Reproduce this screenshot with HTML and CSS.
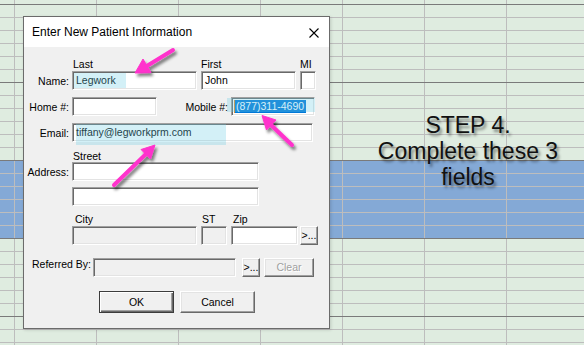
FILE: index.html
```html
<!DOCTYPE html>
<html>
<head>
<meta charset="utf-8">
<link rel="stylesheet" href="styles.css">
</head>
<body>
<div class="sheet">
  <div class="step">STEP 4.<br>Complete these 3<br>fields</div>

  <div class="dialog">
    <div class="titlebar">
      <span>Enter New Patient Information</span>
      <svg class="close" width="10" height="10" viewBox="0 0 10 10"><path d="M0.5 0.5 L9.5 9.5 M9.5 0.5 L0.5 9.5" stroke="#000" stroke-width="1.1" fill="none"/></svg>
    </div>
    <div class="dlg-body">
      <div class="toplabels">
        <span class="c-last">Last</span>
        <span class="c-first">First</span>
        <span class="c-mi">MI</span>
      </div>
      <div class="row">
        <span class="lbl">Name:</span>
        <div class="tb w125">Legwork</div>
        <div class="tb w95 ml4">John</div>
        <div class="tb w16 ml4"></div>
      </div>
      <div class="row mt7">
        <span class="lbl">Home #:</span>
        <div class="tb w85"></div>
        <span class="lbl lbl-mobile">Mobile #:</span>
        <div class="tb w84"><span class="sel">(877)311-4690</span></div>
      </div>
      <div class="row mt7">
        <span class="lbl">Email:</span>
        <div class="tb w241">tiffany@legworkprm.com</div>
      </div>
      <div class="street">Street</div>
      <div class="row">
        <span class="lbl">Address:</span>
        <div class="tb w187"></div>
      </div>
      <div class="row mt6 indent">
        <div class="tb w187"></div>
      </div>
      <div class="citylabels">
        <span class="c-city">City</span>
        <span class="c-st">ST</span>
        <span class="c-zip">Zip</span>
      </div>
      <div class="row indent">
        <div class="tb dis w125"></div>
        <div class="tb dis w26 ml4"></div>
        <div class="tb w67 ml4"></div>
        <div class="btn w18 ml2">&gt;...</div>
      </div>
      <div class="row mt13">
        <span class="lbl-ref">Referred By:</span>
        <div class="tb dis w143"></div>
        <div class="btn w18 ml6">&gt;...</div>
        <div class="btn w50 ml4 disabled">Clear</div>
      </div>
      <div class="row btnrow">
        <div class="btn big default w75">OK</div>
        <div class="btn big w75 ml6">Cancel</div>
      </div>
    </div>
  </div>

  <div class="hl hl-name"></div>
  <div class="hl hl-mobile"></div>
  <div class="hl hl-email"></div>

  <svg class="arrows" width="584" height="345" viewBox="0 0 584 345">
    <defs>
      <filter id="sh" x="-20%" y="-20%" width="160%" height="160%">
        <feGaussianBlur in="SourceAlpha" stdDeviation="1.6"/>
        <feOffset dx="2" dy="3" result="b"/>
        <feComponentTransfer><feFuncA type="linear" slope="0.5"/></feComponentTransfer>
        <feMerge><feMergeNode/><feMergeNode in="SourceGraphic"/></feMerge>
      </filter>
    </defs>
    <g filter="url(#sh)" fill="#ff33cc" stroke="#ff33cc">
      <line x1="173" y1="50" x2="146" y2="66.5" stroke-width="4" stroke-linecap="round"/>
      <polygon points="135,73 151,72.5 143,59" stroke-width="1" stroke-linejoin="round"/>
      <line x1="292" y1="145" x2="271" y2="125" stroke-width="4" stroke-linecap="round"/>
      <polygon points="262,115.5 276,120 266.5,130" stroke-width="1" stroke-linejoin="round"/>
      <line x1="114" y1="185" x2="146" y2="154" stroke-width="4" stroke-linecap="round"/>
      <polygon points="155,145 150.5,159 141,149.5" stroke-width="1" stroke-linejoin="round"/>
    </g>
  </svg>
</div>
</body>
</html>
```

FILE: styles.css
```css
* { box-sizing: border-box; }
html, body { margin: 0; padding: 0; }
body {
  width: 584px;
  height: 345px;
  overflow: hidden;
  font-family: "Liberation Sans", Arial, sans-serif;
  color: #000;
}
.sheet {
  position: relative;
  width: 584px;
  height: 345px;
  background-color: #dfece0;
  background-image:
    linear-gradient(#7a7a7a 1px, transparent 1px),
    linear-gradient(#bdbdbd 1px, transparent 1px),
    linear-gradient(to right, #bdbdbd 1px, transparent 1px),
    linear-gradient(transparent 160px, #84a9d6 160px, #84a9d6 238px, transparent 238px);
  background-size: 100% 78px, 100% 13px, 82px 100%, 100% 100%;
  background-position: 0 4px, 0 4px, 14px 0, 0 0;
  background-repeat: repeat, repeat, repeat, no-repeat;
}

.step {
  position: absolute;
  left: 348px;
  top: 112px;
  width: 240px;
  text-align: center;
  font-size: 23px;
  line-height: 26px;
  color: #111;
  text-shadow: 2px 3px 3px rgba(0, 0, 0, 0.45);
}

.dialog {
  position: absolute;
  left: 23px;
  top: 16px;
  width: 307px;
  height: 313px;
  border: 1px solid #6b6b6b;
  background: #f0f0f0;
  box-shadow: 1px 1px 3px rgba(0, 0, 0, 0.15);
}
.titlebar {
  height: 30px;
  background: #fff;
  display: flex;
  align-items: center;
  justify-content: space-between;
  padding: 0 10px 0 8px;
  font-size: 12px;
  line-height: 30px;
}
.close { display: block; margin-top: 1px; }

.dlg-body { font-size: 10.5px; line-height: 13px; }

.toplabels { display: flex; margin-top: 11px; height: 13px; }
.c-last { width: 128px; margin-left: 49px; }
.c-first { width: 99px; }

.row { display: flex; align-items: flex-start; height: 19px; }
.mt6 { margin-top: 6px; }
.mt7 { margin-top: 7px; }
.mt13 { margin-top: 13px; }
.ml2 { margin-left: 2px; }
.ml4 { margin-left: 4px; }
.ml6 { margin-left: 6px; }
.indent { padding-left: 48px; }

.lbl {
  width: 45px;
  margin-right: 3px;
  text-align: right;
  padding-top: 4px;
  white-space: nowrap;
}
.lbl-mobile { width: 71px; }
.lbl-ref { width: 69px; padding-left: 8px; white-space: nowrap; }

.street { margin-top: 8px; height: 12px; line-height: 12px; padding-left: 49px; }

.citylabels { display: flex; margin-top: 6px; height: 14px; line-height: 14px; }
.c-city { width: 177px; padding-left: 51px; }
.c-st { width: 30px; padding-left: 1px; }
.c-zip { padding-left: 2px; }

.tb {
  height: 19px;
  background: #fff;
  border: 1px solid;
  border-color: #a0a0a0 #fff #fff #a0a0a0;
  box-shadow: inset 1px 1px #696969, inset -1px -1px #e3e3e3;
  padding: 1.5px 3px 0 3px;
  white-space: nowrap;
  overflow: hidden;
}
.tb.dis { background: #f0f0f0; }
.w16 { width: 16px; }
.w18 { width: 18px; }
.w26 { width: 26px; }
.w50 { width: 50px; }
.w67 { width: 67px; }
.w75 { width: 75px; }
.w84 { width: 84px; }
.w85 { width: 85px; }
.w95 { width: 95px; }
.w125 { width: 125px; }
.w143 { width: 143px; }
.w187 { width: 187px; }
.w241 { width: 241px; }

.sel {
  display: inline-block;
  background: #0078d7;
  color: #fff;
  padding: 0 2px 0 1px;
  margin-left: -1px;
  border-left: 1px solid #e08a2a;
}

.btn {
  height: 19px;
  background: #f0f0f0;
  border: 1px solid;
  border-color: #fff #696969 #696969 #fff;
  box-shadow: inset -1px -1px #a0a0a0, inset 1px 1px #e3e3e3;
  text-align: center;
  line-height: 17px;
  white-space: nowrap;
}
.btn.disabled { color: #a0a0a0; text-shadow: 1px 1px #fff; }
.btnrow { margin-top: 14px; height: 22px; padding-left: 75px; }
.btn.big { height: 22px; line-height: 20px; }
.btn.default {
  border-color: #3c3c3c;
  box-shadow: inset 1px 1px #fff, inset -1px -1px #696969, inset -2px -2px #a0a0a0;
}

.hl {
  position: absolute;
  background: rgba(110, 205, 230, 0.3);
}
.hl-name { left: 74px; top: 73px; width: 52px; height: 15px; }
.hl-mobile { left: 227px; top: 98px; width: 88px; height: 14px; }
.hl-email { left: 76px; top: 124px; width: 150px; height: 21px; }

.arrows { position: absolute; left: 0; top: 0; pointer-events: none; }
```
